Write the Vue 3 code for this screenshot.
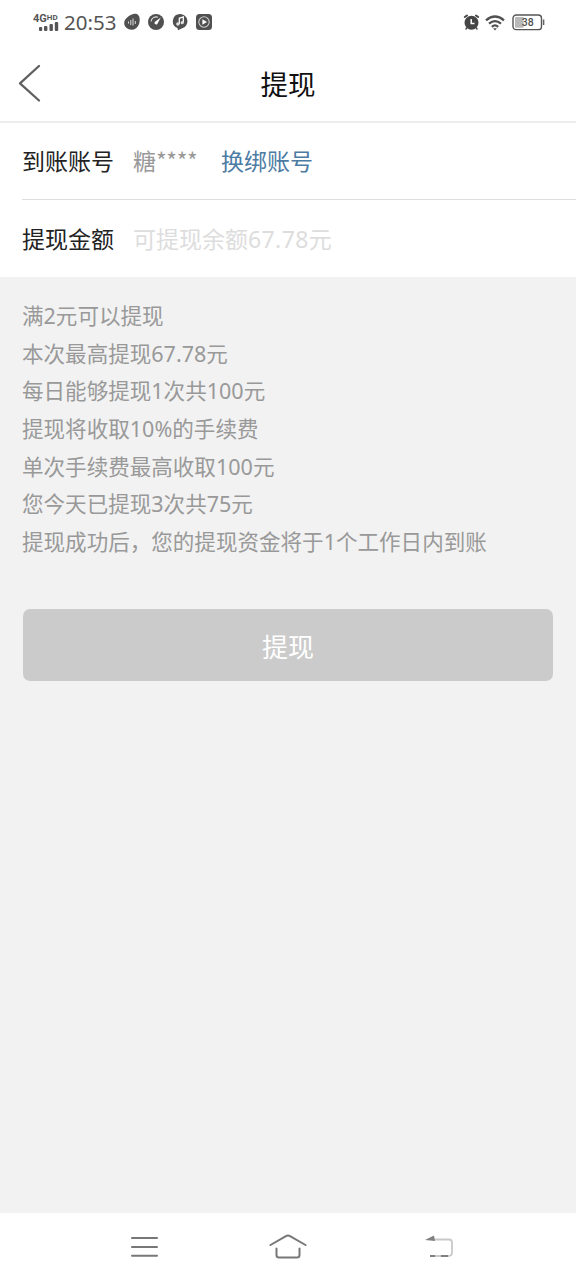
<script setup>
const notes = [
  '满2元可以提现',
  '本次最高提现67.78元',
  '每日能够提现1次共100元',
  '提现将收取10%的手续费',
  '单次手续费最高收取100元',
  '您今天已提现3次共75元',
  '提现成功后，您的提现资金将于1个工作日内到账',
]
</script>

<template>
  <div class="screen">
    <div class="status">
      <div class="network">
        <span class="net-label">4G<small>HD</small></span>
        <svg class="signal" width="20" height="9" viewBox="0 0 20 9" fill="#555">
          <rect x="0" y="5" width="3.2" height="4" rx="1" />
          <rect x="5" y="4" width="3.4" height="5" rx="1" />
          <rect x="10.5" y="2" width="3.4" height="7" rx="1" />
          <rect x="15.800" y="0" width="3.4" height="9" rx="1" />
        </svg>
      </div>
      <span class="clock">20:53</span>
      <div class="apps">
        <svg width="16" height="18" viewBox="0 0 16 18">
          <path d="M9.5 1C13 .3 15.8 2.2 15.7 6.500C15.700 12 13 16.500 8 16.700C3.500 16.800.2 14 .2 10C.2 6 5 2 9.500 1Z" fill="#505050" />
          <path d="M4.500 8.500v2M6.800 7v5M9 5.500v7M11.300 8v3" stroke="#ddd" stroke-width="1" fill="none" />
        </svg>
        <svg width="16" height="18" viewBox="0 0 16 18">
          <circle cx="8" cy="9" r="8" fill="#505050" />
          <path d="M3 8.500A5.200 5.200 0 0 1 10 4.200" stroke="#ddd" stroke-width="1.100" fill="none" />
          <path d="M12.800 4.500L9.200 11.200A1.700 1.700 0 0 1 6.700 9Z" fill="#fff" />
        </svg>
        <svg width="16" height="18" viewBox="0 0 16 18">
          <path d="M8 1a7.300 7.300 0 0 1 2.200 14.300L6 17.300l-.5-2.200A7.300 7.300 0 0 1 8 1Z" fill="#505050" />
          <path d="M7.300 11V5.300l4-1.300v5.500" stroke="#fff" stroke-width="1.300" fill="none" />
          <circle cx="5.900" cy="11" r="1.800" fill="#ddd" />
          <circle cx="10.200" cy="9.700" r="1.600" fill="#ddd" />
        </svg>
        <svg width="16" height="18" viewBox="0 0 16 18">
          <rect x="0" y="1" width="16" height="16" rx="3.500" fill="#505050" />
          <circle cx="8" cy="9" r="5.200" stroke="#ccc" stroke-width="1.100" fill="none" />
          <path d="M6.400 6.200L11 9l-4.600 2.800Z" fill="#fff" />
        </svg>
      </div>
      <div class="system">
        <svg class="alarm" width="17" height="18" viewBox="0 0 17 18">
          <path d="M1.800 4L4 2.500M15.200 4L13 2.500" stroke="#454545" stroke-width="2" stroke-linecap="round" />
          <circle cx="8.500" cy="9.800" r="7" fill="#454545" />
          <path d="M3.800 14.500L2.800 16.500M13.200 14.500l1 2" stroke="#454545" stroke-width="1.600" />
          <path d="M8.200 6v4.500h3.300" stroke="#fff" stroke-width="1.500" fill="none" />
        </svg>
        <svg class="wifi" width="20" height="16" viewBox="0 0 20 16" fill="none" stroke="#505050" stroke-width="2.300">
          <path d="M1 5.300Q10-2.300 19 5.300" />
          <path d="M4 8.700Q10 3.500 16 8.700" />
          <path d="M6.800 11.800Q10 9 13.200 11.800" />
          <path d="M8 13.200h4L10 15.500Z" fill="#505050" stroke="none" />
        </svg>
        <svg class="battery" width="33" height="17" viewBox="0 0 33 17">
          <rect x="1" y="1" width="28.500" height="14.600" rx="3.200" fill="#fff" stroke="#555" stroke-width="1.400" />
          <path d="M4 3h7.500v10.700H4a1 1 0 0 1-1-1V4a1 1 0 0 1 1-1Z" fill="#b9b9b9" />
          <path d="M31.600 5.500v5.500" stroke="#666" stroke-width="1.500" />
          <text x="15.800" y="12" text-anchor="middle" font-size="10.500" fill="#505050">38</text>
        </svg>
      </div>
    </div>

    <header class="header">
      <svg class="back" width="24" height="40" viewBox="0 0 24 40" fill="none" stroke="#606060" stroke-width="2.300" stroke-linecap="round" stroke-linejoin="round">
        <path d="M21 3L2 20.300L21 37.500" />
      </svg>
      <h1>提现</h1>
    </header>

    <section class="form">
      <div class="row">
        <span class="label">到账账号</span>
        <span class="account">糖<span class="mask">****</span></span>
        <a class="change">换绑账号</a>
      </div>
      <div class="row">
        <span class="label">提现金额</span>
        <span class="placeholder">可提现余额<span class="sum">67.78</span>元</span>
      </div>
    </section>

    <main class="body">
      <p v-for="note in notes" :key="note">{{ note }}</p>
      <button class="submit">提现</button>
    </main>

    <nav class="nav">
      <svg width="28" height="24" viewBox="0 0 28 24" stroke="#777" stroke-width="2" stroke-linecap="round">
        <path d="M2 3h25M2 12h25M2 20.700h25" />
      </svg>
      <svg width="38" height="26" viewBox="0 0 38 26" fill="none" stroke="#777" stroke-width="2" stroke-linecap="round" stroke-linejoin="round">
        <path d="M1.500 11L16.500 2.300Q19 .9 21.500 2.300L36.500 11" />
        <path d="M7.500 14.500v6.500q0 2.500 2.500 2.500h18q2.500 0 2.500-2.500V14.500" />
      </svg>
      <svg width="28" height="24" viewBox="0 0 28 24" fill="none">
        <path d="M8 4.500h16q3 0 3 3v10q0 3.500-3.500 3.500H5" stroke="#c9c9c9" stroke-width="1.800" />
        <path d="M5 21h5M16 21h7" stroke="#808080" stroke-width="2.200" />
        <path d="M0 5L9 .5L10 6Z" fill="#808080" />
      </svg>
    </nav>
  </div>
</template>

<style>
body {
  margin: 0;
}
</style>

<style scoped>
.screen {
  width: 576px;
  height: 1280px;
  display: flex;
  flex-direction: column;
  background: #f2f2f2;
  font-family: "Noto Sans", "Noto Sans CJK SC", sans-serif;
  overflow: hidden;
}
.status {
  height: 46px;
  display: flex;
  align-items: flex-start;
  background: #fff;
  color: #555;
  box-sizing: border-box;
  padding-left: 33px;
}
.network {
  width: 27px;
  padding-top: 12px;
  display: flex;
  flex-direction: column;
}
.net-label {
  font: bold 11px/11px Roboto, sans-serif;
  height: 10px;
  white-space: nowrap;
}
.net-label small {
  font-size: 8px;
  vertical-align: 2px;
}
.signal {
  margin-left: 6px;
}
.clock {
  width: 60px;
  margin-left: 4px;
  font: 20.5px/44px "Noto Sans", sans-serif;
}
.apps {
  display: flex;
  gap: 8px;
  padding-top: 13px;
}
.system {
  display: flex;
  margin-left: auto;
  padding: 14px 31px 0 0;
}
.alarm {
  margin-top: -1px;
}
.wifi {
  margin: 1px 7px 0 5px;
}
.battery text {
  font-family: Roboto, sans-serif;
  font-weight: 500;
}
.header {
  height: 77px;
  flex: none;
  box-sizing: border-box;
  border-bottom: 2px solid #ededed;
  background: #fff;
  display: grid;
  grid-template-columns: 60px 1fr 60px;
  align-items: center;
  padding-bottom: 2px;
}
.back {
  margin-left: 18px;
}
h1 {
  margin: 0;
  padding-top: 4px;
  font-size: 27.5px;
  line-height: 40px;
  font-weight: 400;
  text-align: center;
  color: #111;
}
.form {
  background: #fff;
  height: 154px;
  padding-left: 22px;
}
.row {
  height: 77px;
  box-sizing: border-box;
  padding-bottom: 2px;
  display: flex;
  align-items: center;
  font-size: 23px;
  white-space: nowrap;
}
.row:first-child {
  border-bottom: 1px solid #dedede;
}
.label {
  width: 111px;
  color: #222;
}
.account {
  width: 88px;
  color: #999;
}
.mask {
  font-family: "Noto Sans CJK SC", sans-serif;
  line-height: 1;
  letter-spacing: -0.4px;
}
.change {
  color: #4c7ba3;
}
.placeholder {
  color: #ddd;
}
.sum {
  letter-spacing: 0.4px;
}
.body {
  flex: 1;
  padding: 20px 23px 0 22px;
}
p {
  margin: 0;
  height: 37.65px;
  font-size: 21.55px;
  line-height: 37.65px;
  color: #999;
  white-space: nowrap;
}
.submit {
  display: block;
  width: 530px;
  height: 72px;
  margin: 49px 0 0 1px;
  padding: 4px 0 0;
  border: 0;
  border-radius: 7px;
  background: #cbcbcb;
  color: #fff;
  font-family: inherit;
  font-size: 26px;
  line-height: 68px;
}
.nav {
  height: 67px;
  flex: none;
  background: #fff;
  display: grid;
  grid-template-columns: 144px 144px 158px;
  justify-content: center;
  align-items: center;
  justify-items: center;
  padding-left: 14px;
}
</style>
